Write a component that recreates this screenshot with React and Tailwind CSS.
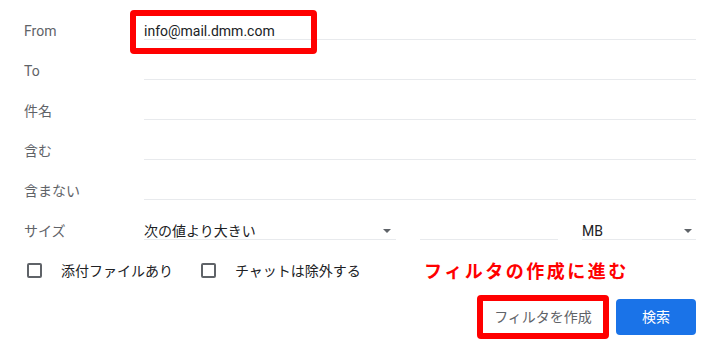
import React from "react";

const font = { fontFamily: 'Roboto, "Noto Sans CJK JP", sans-serif' };

function Arrow() {
  return (
    <svg width="8" height="4" viewBox="0 0 8 4" className="shrink-0">
      <path d="M0 0 L8 0 L4 4 Z" fill="#5f6368" />
    </svg>
  );
}

function Row({ label, children }) {
  return (
    <div className="flex h-10">
      <div className="w-[144px] shrink-0 pl-6 pt-[22px] text-[14px] leading-[18px] text-[#5f6368]">
        {label}
      </div>
      <div className="flex-1 h-10 border-b border-[#e8eaed] pt-[22px] text-[14px] leading-[18px] text-[#202124]">
        {children}
      </div>
    </div>
  );
}

function Check({ label }) {
  return (
    <div className="flex items-center">
      <div className="w-[15px] h-[15px] border-2 border-[#5f6368] rounded-[2px]" />
      <span className="ml-[19px] text-[14px] leading-5 text-[#202124]">{label}</span>
    </div>
  );
}

export default function App() {
  return (
    <div
      className="relative w-[718px] h-[354px] bg-white overflow-hidden pr-[22px]"
      style={font}
    >
      <Row label="From">info@mail.dmm.com</Row>
      <Row label="To" />
      <Row label="件名" />
      <Row label="含む" />
      <Row label="含まない" />
      <div className="flex h-10">
        <div className="w-[144px] shrink-0 pl-6 pt-[22px] text-[14px] leading-[18px] text-[#5f6368]">
          サイズ
        </div>
        <div className="w-[252px] h-10 border-b border-[#e8eaed] pt-[22px] pr-[5px] flex items-start justify-between text-[14px] leading-[18px] text-[#202124]">
          <span>次の値より大きい</span>
          <div className="pt-[7px]">
            <Arrow />
          </div>
        </div>
        <div className="w-[138px] ml-6 h-10 border-b border-[#e8eaed]" />
        <div className="flex-1 ml-6 h-10 border-b border-[#e8eaed] pt-[22px] pr-1 flex items-start justify-between text-[14px] leading-[18px] text-[#202124]">
          <span>MB</span>
          <div className="pt-[7px]">
            <Arrow />
          </div>
        </div>
      </div>
      <div className="flex items-center h-[21px] mt-[20px] pl-[27px] gap-[28px]">
        <Check label="添付ファイルあり" />
        <Check label="チャットは除外する" />
      </div>
      <div className="flex justify-end items-center mt-[14px] gap-[7px]">
        <div className="w-[132px] h-[44px] border-[6px] border-[#ff0000] rounded-[4px] flex items-center justify-center text-[14px] text-[#5f6368]">
          フィルタを作成
        </div>
        <div className="w-[80px] h-[36px] rounded-[4px] bg-[#1a73e8] flex items-center justify-center text-[14px] text-white">
          検索
        </div>
      </div>

      <div className="absolute left-[130px] top-[10px] w-[187px] h-[44px] border-[6px] border-[#ff0000] rounded-[4px]" />
      <div className="absolute left-[424px] top-[260px] text-[18px] leading-[24px] font-bold tracking-[2.5px] text-[#ff0000]">
        フィルタの作成に進む
      </div>
    </div>
  );
}
